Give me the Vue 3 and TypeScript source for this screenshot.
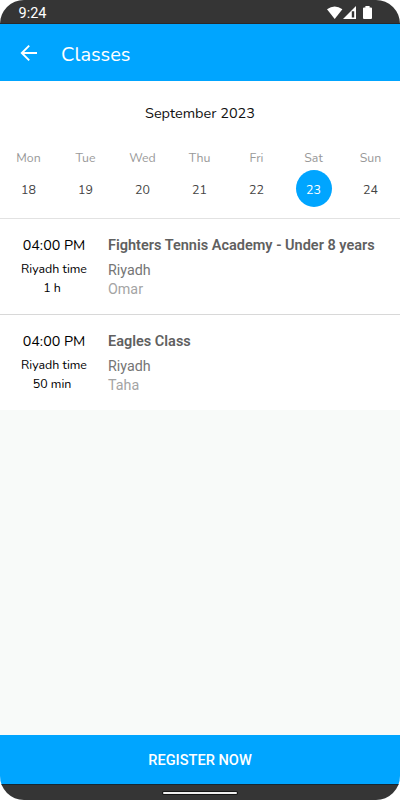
<script setup lang="ts">
interface Day {
  name: string
  date: number
}
interface ClassItem {
  time: string
  zone: string
  duration: string
  title: string
  city: string
  coach: string
}

const selected = 23
const days: Day[] = ['Mon', 'Tue', 'Wed', 'Thu', 'Fri', 'Sat', 'Sun'].map((name, i) => ({ name, date: 18 + i }))
const classes: ClassItem[] = [
  { time: '04:00 PM', zone: 'Riyadh time', duration: '1 h', title: 'Fighters Tennis Academy - Under 8 years', city: 'Riyadh', coach: 'Omar' },
  { time: '04:00 PM', zone: 'Riyadh time', duration: '50 min', title: 'Eagles Class', city: 'Riyadh', coach: 'Taha' },
]
</script>

<template>
  <div class="screen">
    <div class="status">
      <span class="clock">9:24</span>
      <svg class="status-icons" width="48" height="16" viewBox="0 0 48 16">
        <path d="M0 4.2 Q7.7 -1.2 15.4 4.2 L7.7 14 Z" fill="#fff" />
        <path d="M29 1 V14 H16 Z" fill="#fff" />
        <path d="M24.8 6.2 H27.2 V12.6 H24.8 Z" fill="#333" />
        <path d="M37 2.4 H38.4 V1 H42.6 V2.4 H44 Q45 2.4 45 3.4 V13 Q45 14 44 14 H37 Q36 14 36 13 V3.4 Q36 2.4 37 2.4 Z" fill="#fff" />
      </svg>
    </div>
    <header class="bar">
      <svg class="back" width="18" height="18" viewBox="0 0 18 18">
        <path d="M17 9 H2 M9.2 1.6 L1.8 9 L9.2 16.4" fill="none" stroke="#fff" stroke-width="1.9" />
      </svg>
      <h1 class="heading">Classes</h1>
    </header>
    <section class="calendar">
      <div class="month"><span>September 2023</span></div>
      <div class="week">
        <div v-for="d in days" :key="d.date" class="day">
          <span class="name">{{ d.name }}</span>
          <span class="date" :class="{ active: d.date === selected }">{{ d.date }}</span>
        </div>
      </div>
    </section>
    <article v-for="(c, i) in classes" :key="i" class="item">
      <div class="when">
        <span class="time">{{ c.time }}</span>
        <span class="zone">{{ c.zone }}</span>
        <span class="duration">{{ c.duration }}</span>
      </div>
      <div class="info">
        <span class="title">{{ c.title }}</span>
        <span class="city">{{ c.city }}</span>
        <span class="coach">{{ c.coach }}</span>
      </div>
    </article>
    <button class="register">REGISTER NOW</button>
    <div class="nav"><div class="handle"></div></div>
  </div>
</template>

<style>
body {
  background: #fff;
}
</style>

<style scoped>
.screen {
  width: 400px;
  height: 800px;
  display: flex;
  flex-direction: column;
  overflow: hidden;
  border-radius: 24px;
  background: #f8faf9;
  font-family: Nunito, "Noto Sans", sans-serif;
}
.status {
  box-sizing: border-box;
  height: 24px;
  flex: none;
  display: flex;
  justify-content: space-between;
  padding: 5px 25px 0 18.5px;
  background: #353535;
  border-bottom: 1px solid #28292a;
}
.clock {
  font: 400 14.5px/17px Roboto, sans-serif;
  color: #fff;
}
.status-icons {
  flex: none;
}
.bar {
  box-sizing: border-box;
  height: 57px;
  flex: none;
  display: flex;
  align-items: center;
  gap: 15px;
  padding-left: 20px;
  background: #00a5ff;
}
.back {
  flex: none;
}
.heading {
  margin: 4px 0 0 8px;
  font-size: 20px;
  font-weight: 400;
  line-height: 28px;
  color: #fff;
}
.calendar {
  box-sizing: border-box;
  height: 138px;
  flex: none;
  padding-top: 22px;
  background: #fff;
  border-bottom: 1px solid #e2e2e2;
}
.month {
  text-align: center;
  font-size: 14.5px;
  line-height: 20px;
  color: #111;
}
.week {
  display: grid;
  grid-template-columns: repeat(7, 57px);
  padding-top: 26px;
}
.day {
  display: flex;
  flex-direction: column;
  align-items: center;
}
.name {
  font-size: 12.3px;
  line-height: 18px;
  font-weight: 400;
  color: #999;
}
.date {
  width: 36px;
  height: 37px;
  margin-top: 3px;
  border-radius: 50%;
  text-align: center;
  font-size: 12.4px;
  line-height: 39px;
  color: #444;
}
.date.active {
  background: #00a5ff;
  color: #fff;
}
.item {
  box-sizing: border-box;
  height: 96px;
  flex: none;
  display: flex;
  padding-top: 16px;
  background: #fff;
  border-bottom: 1px solid #d8d8d8;
}
.item + .item {
  height: 95px;
  border-bottom: none;
}
.when {
  width: 108px;
  display: flex;
  flex-direction: column;
  align-items: center;
  color: #000;
}
.time {
  font-size: 14.3px;
  line-height: 22px;
}
.zone {
  font-size: 12.4px;
  line-height: 19px;
  margin-top: 2px;
}
.duration {
  font-size: 12.4px;
  line-height: 19px;
  margin-right: 4px;
}
.info {
  display: flex;
  flex-direction: column;
  font-family: Roboto, sans-serif;
  font-size: 14.3px;
  line-height: 20px;
  white-space: nowrap;
}
.title {
  font-size: 14.5px;
  font-weight: 600;
  line-height: 22px;
  color: #606060;
}
.city {
  margin-top: 3px;
  color: #757575;
}
.coach {
  line-height: 19px;
  color: #a4a4a4;
}
.register {
  height: 49px;
  flex: none;
  margin: auto 0 0;
  padding: 1px 0 0;
  border: 0;
  background: #00a5ff;
  color: #fff;
  font: 500 14.6px/48px Roboto, sans-serif;
}
.nav {
  box-sizing: border-box;
  height: 16px;
  flex: none;
  display: flex;
  justify-content: center;
  padding-top: 7px;
  background: #353535;
  border-top: 1px solid #152733;
}
.handle {
  width: 74px;
  height: 2px;
  border-radius: 2px;
  background: #f0f0f0;
  box-shadow: 0 0 0 1px #151515;
}
</style>
